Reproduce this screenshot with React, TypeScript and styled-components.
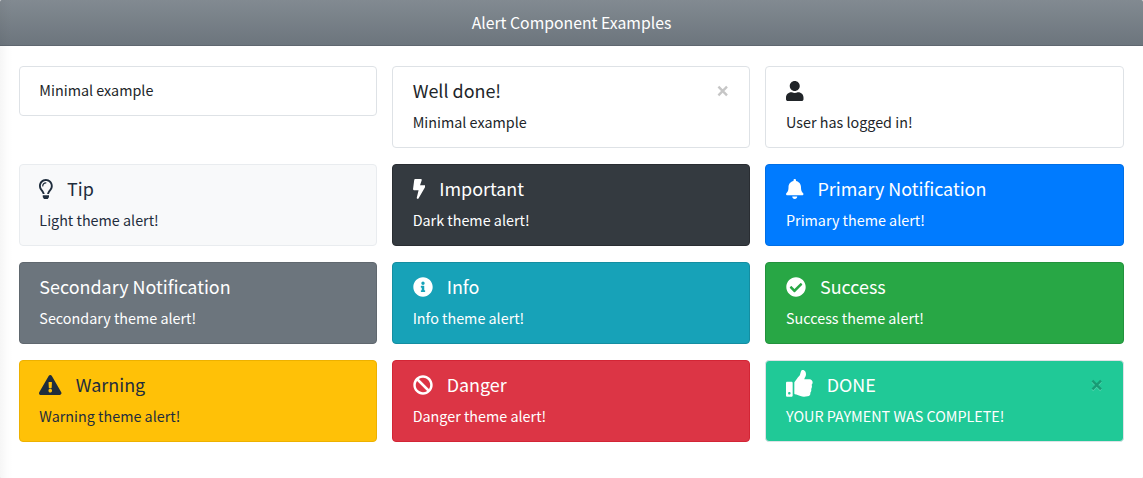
import React from "react";
import styled, { createGlobalStyle } from "styled-components";
import type { IconType } from "react-icons";
import {
  FaUser,
  FaRegLightbulb,
  FaBolt,
  FaBell,
  FaInfoCircle,
  FaCheckCircle,
  FaExclamationTriangle,
  FaBan,
  FaThumbsUp,
} from "react-icons/fa";

const GlobalStyle = createGlobalStyle`
  *, *::before, *::after { box-sizing: border-box; }
  body {
    margin: 0;
    background: #e4e4e4;
    color: #212529;
    font-family: "Noto Sans CJK SC", "Noto Sans", sans-serif;
    font-size: 14.35px;
    line-height: 24px;
  }
`;

const Page = styled.div`
  position: relative;
  display: flex;
  flex-direction: column;
  height: 478px;
  border-radius: 1.5px;
  overflow: hidden;
  background: #fff;

  &::after {
    content: "";
    position: absolute;
    inset: 0 auto 0 0;
    width: 13px;
    background: linear-gradient(to right, rgba(0, 0, 0, 0.035), rgba(0, 0, 0, 0.008) 8px, transparent);
  }
`;

const Header = styled.header`
  display: flex;
  align-items: center;
  justify-content: center;
  flex: none;
  height: 46px;
  border-bottom: 1px solid #5f6770;
  background: linear-gradient(#828a91, #6c757d);
  color: #fff;
  font-size: 15.77px;
  line-height: 23px;
`;

const Grid = styled.main`
  display: grid;
  grid-template-columns: repeat(3, 1fr);
  gap: 16px 15px;
  align-items: start;
  padding: 20px 19.25px 0 18.75px;
`;

const Card = styled.section<{ $bg: string; $border: string; $color: string }>`
  padding: 12px 20px 12px 19.6px;
  border: 1px solid ${(p) => p.$border};
  border-radius: 4px;
  background: ${(p) => p.$bg};
  color: ${(p) => p.$color};
`;

const Heading = styled.div`
  display: flex;
  align-items: center;
  height: 24px;
  margin-bottom: 8px;
`;

const IconSlot = styled.span<{ $width: number; $height: number; $lift: number }>`
  display: flex;
  flex: none;
  width: ${(p) => p.$width}px;
  height: ${(p) => p.$height}px;
  margin-right: 14px;
  margin-bottom: ${(p) => p.$lift * 2}px;

  svg {
    width: 100%;
    height: 100%;
  }
`;

const Title = styled.h5`
  margin: 0;
  font-size: 17.93px;
  font-weight: 400;
  line-height: 23px;
  padding-bottom: 1px;
`;

const Message = styled.div`
  padding-bottom: 2px;
  line-height: 22px;
`;

const Close = styled.button`
  display: flex;
  margin-left: auto;
  padding: 0;
  border: 0;
  background: none;
  color: #000;
  opacity: 0.22;

  svg {
    filter: drop-shadow(0 1px 0 #fff);
  }
`;

type AlertProps = {
  bg?: string;
  border?: string;
  color?: string;
  icon?: IconType;
  iconWidth?: number;
  iconHeight?: number;
  iconLift?: number;
  title?: string;
  message: string;
  dismissible?: boolean;
};

const alerts: AlertProps[] = [
  { message: "Minimal example" },
  { title: "Well done!", message: "Minimal example", dismissible: true },
  { icon: FaUser, iconWidth: 17.5, message: "User has logged in!" },
  { bg: "#f8f9fa", border: "#e9ecef", color: "#1f2d3d", icon: FaRegLightbulb, iconWidth: 13.75, title: "Tip", message: "Light theme alert!" },
  { bg: "#343a40", border: "#292d32", color: "#fff", icon: FaBolt, iconWidth: 12.5, title: "Important", message: "Dark theme alert!" },
  { bg: "#007bff", border: "#006fe6", color: "#fff", icon: FaBell, iconWidth: 17.5, title: "Primary Notification", message: "Primary theme alert!" },
  { bg: "#6c757d", border: "#60686f", color: "#fff", title: "Secondary Notification", message: "Secondary theme alert!" },
  { bg: "#17a2b8", border: "#148ea1", color: "#fff", icon: FaInfoCircle, title: "Info", message: "Info theme alert!" },
  { bg: "#28a745", border: "#23923d", color: "#fff", icon: FaCheckCircle, title: "Success", message: "Success theme alert!" },
  { bg: "#ffc107", border: "#edb100", color: "#1f2d3d", icon: FaExclamationTriangle, iconWidth: 22.5, title: "Warning", message: "Warning theme alert!" },
  { bg: "#dc3545", border: "#d32535", color: "#fff", icon: FaBan, title: "Danger", message: "Danger theme alert!" },
  { bg: "#20c997", color: "#fff", icon: FaThumbsUp, iconWidth: 26.67, iconHeight: 26.67, iconLift: 1.8, title: "DONE", message: "YOUR PAYMENT WAS COMPLETE!", dismissible: true },
];

function Alert({
  bg = "#fff",
  border = "#dee2e6",
  color = "#212529",
  icon: Icon,
  iconWidth = 20,
  iconHeight = 20,
  iconLift = 0.4,
  title,
  message,
  dismissible,
}: AlertProps) {
  return (
    <Card $bg={bg} $border={border} $color={color}>
      {(Icon || title) && (
        <Heading>
          {Icon && (
            <IconSlot $width={iconWidth} $height={iconHeight} $lift={iconLift}>
              <Icon />
            </IconSlot>
          )}
          {title && <Title>{title}</Title>}
          {dismissible && (
            <Close aria-label="Close">
              <svg width="12" height="12" viewBox="0 0 12 12">
                <path d="M1.4 1.7 10 10.3M10 1.7 1.4 10.3" stroke="currentColor" strokeWidth="2.4" />
              </svg>
            </Close>
          )}
        </Heading>
      )}
      <Message>{message}</Message>
    </Card>
  );
}

export default function App() {
  return (
    <>
      <GlobalStyle />
      <Page>
        <Header>Alert Component Examples</Header>
        <Grid>
          {alerts.map((alert, index) => (
            <Alert key={index} {...alert} />
          ))}
        </Grid>
      </Page>
    </>
  );
}
